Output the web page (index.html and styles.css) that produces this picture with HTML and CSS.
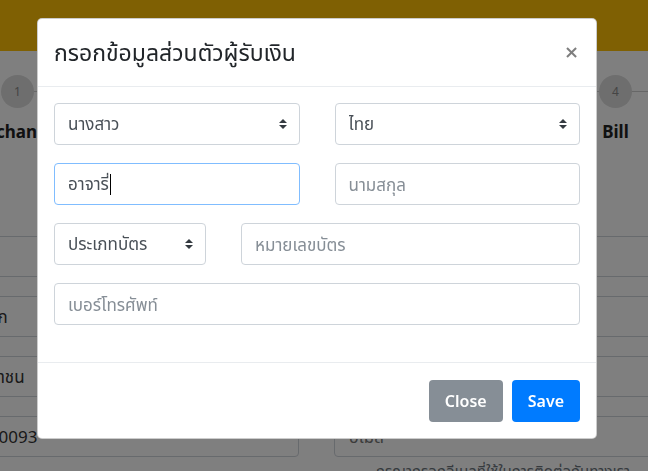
FILE: index.html
```html
<!DOCTYPE html>
<html lang="th">
<head>
<meta charset="utf-8">
<title>กรอกข้อมูลส่วนตัวผู้รับเงิน</title>
<link rel="stylesheet" href="styles.css">
</head>
<body>
<div class="page">
  <div class="topbar"></div>
  <div class="steps">
    <div class="step"><div class="circle">1</div><div class="step-label">Exchange</div></div>
    <div class="connector"></div>
    <div class="step"><div class="circle">2</div><div class="step-label">Info</div></div>
    <div class="connector"></div>
    <div class="step"><div class="circle">3</div><div class="step-label">Payment</div></div>
    <div class="connector"></div>
    <div class="step"><div class="circle">4</div><div class="step-label">Bill</div></div>
    <div class="connector end"></div>
  </div>
  <div class="bg-form">
    <div class="bg-field left"></div><div class="bg-field"></div>
    <div class="bg-field left">นามสกุลผู้ฝาก</div><div class="bg-field"></div>
    <div class="bg-field left">เลขบัตรประชาชน</div><div class="bg-field"></div>
    <div class="bg-field left">1100800020093</div><div class="bg-field placeholder">อีเมล</div>
    <div></div><div class="bg-help">กรุณากรอกอีเมลที่ใช้ในการติดต่อกับทางเรา</div>
  </div>
</div>

<div class="backdrop"></div>

<div class="modal">
  <div class="dialog">
    <div class="content">
      <div class="header">
        <h5 class="title">กรอกข้อมูลส่วนตัวผู้รับเงิน</h5>
        <button class="close" type="button">×</button>
      </div>
      <div class="body">
        <div class="row two">
          <div class="select-wrap">
            <select class="control"><option>นางสาว</option></select>
            <svg class="arrow" viewBox="0 0 4 5" width="8" height="10"><path fill="#343a40" d="M2 0L0 2h4zm0 5L0 3h4z"/></svg>
          </div>
          <div class="select-wrap">
            <select class="control"><option>ไทย</option></select>
            <svg class="arrow" viewBox="0 0 4 5" width="8" height="10"><path fill="#343a40" d="M2 0L0 2h4zm0 5L0 3h4z"/></svg>
          </div>
        </div>
        <div class="row two">
          <div class="control focused">อาจารี่<span class="caret"></span></div>
          <input class="control" type="text" placeholder="นามสกุล">
        </div>
        <div class="row id">
          <div class="select-wrap">
            <select class="control"><option>ประเภทบัตร</option></select>
            <svg class="arrow" viewBox="0 0 4 5" width="8" height="10"><path fill="#343a40" d="M2 0L0 2h4zm0 5L0 3h4z"/></svg>
          </div>
          <input class="control" type="text" placeholder="หมายเลขบัตร">
        </div>
        <div class="row">
          <input class="control" type="text" placeholder="เบอร์โทรศัพท์">
        </div>
      </div>
      <div class="footer">
        <button class="btn secondary" type="button">Close</button>
        <button class="btn primary" type="button">Save</button>
      </div>
    </div>
  </div>
</div>
</body>
</html>
```

FILE: styles.css
```css
* { box-sizing: border-box; }

body {
  margin: 0;
  width: 648px;
  height: 471px;
  overflow: hidden;
  background: #fff;
  font-family: "Noto Sans", "Noto Sans Thai", sans-serif;
  color: #212529;
}

.page {
  width: 648px;
  height: 471px;
  overflow: hidden;
}

.topbar {
  height: 51px;
  background: #ffc107;
}

.steps {
  display: flex;
  align-items: flex-start;
  padding: 24px 0 0 1px;
}

.step {
  width: 33px;
  flex: none;
  display: flex;
  flex-direction: column;
  align-items: center;
}

.circle {
  width: 33px;
  height: 33px;
  border-radius: 50%;
  background: #dcdcdc;
  color: #8a8a8a;
  font-size: 12px;
  display: flex;
  align-items: center;
  justify-content: center;
}

.step-label {
  margin-top: 12px;
  white-space: nowrap;
  font-weight: 700;
  font-size: 17px;
  line-height: 24px;
  color: #222;
}

.connector {
  flex: 1;
  height: 1px;
  margin-top: 16px;
  background: #cfcfcf;
}

.connector.end {
  flex: none;
  width: 16px;
}

.bg-form {
  margin: 92px 0 0 -100px;
  width: 850px;
  display: grid;
  grid-template-columns: 399px 416px;
  column-gap: 35px;
  row-gap: 19px;
}

.bg-field {
  height: 41px;
  border: 1px solid #ced4da;
  border-radius: 4px;
  padding: 0 14px;
  font-size: 17px;
  line-height: 39px;
  color: #333;
  white-space: nowrap;
  overflow: hidden;
}

.bg-field.left {
  padding-left: 10px;
}

.bg-field.placeholder {
  color: #777;
}

.bg-help {
  margin-top: -15px;
  padding-left: 42px;
  font-size: 15px;
  color: #6c757d;
  white-space: nowrap;
}

.backdrop {
  position: fixed;
  inset: 0;
  background: rgba(0, 0, 0, 0.5);
}

.modal {
  position: fixed;
  inset: 0;
}

.dialog {
  width: 560px;
  margin: 18px 0 0 37px;
}

.content {
  background: #fff;
  border: 1px solid rgba(0, 0, 0, 0.2);
  border-radius: 5px;
}

.header {
  display: flex;
  align-items: center;
  justify-content: space-between;
  padding: 16px 16px 17px 16px;
  border-bottom: 1px solid #e9ecef;
}

.title {
  margin: 0;
  font-size: 23px;
  font-weight: 400;
  line-height: 34px;
  color: #212529;
}

.close {
  border: 0;
  background: none;
  padding: 0;
  font-family: "DejaVu Sans", sans-serif;
  font-size: 18px;
  font-weight: 700;
  line-height: 1;
  color: #000;
  opacity: 0.5;
  margin-right: 1px;
}

.body {
  padding: 16px 16px 21px;
}

.row {
  display: grid;
  column-gap: 35px;
  margin-bottom: 18px;
}

.row:last-child {
  margin-bottom: 16px;
}

.row.two {
  grid-template-columns: 1fr 1fr;
}

.row.id {
  grid-template-columns: 152px 1fr;
}

.control {
  display: block;
  width: 100%;
  height: 42px;
  padding: 0 13px;
  border: 1px solid #ced4da;
  border-radius: 4px;
  background: #fff;
  font-family: inherit;
  font-size: 17px;
  line-height: 40px;
  color: #495057;
  outline: none;
  appearance: none;
  -webkit-appearance: none;
}

.control::placeholder {
  color: #868e96;
  opacity: 1;
}

.control.focused {
  border-color: #80bdff;
  display: flex;
  align-items: center;
}

.caret {
  display: inline-block;
  width: 1px;
  height: 21px;
  background: #000;
  margin-left: 1px;
}

.select-wrap {
  position: relative;
}

.arrow {
  position: absolute;
  right: 13px;
  top: 16px;
  pointer-events: none;
}

.footer {
  display: flex;
  justify-content: flex-end;
  padding: 17px 16px 16px;
  border-top: 1px solid #e9ecef;
}

.btn {
  height: 42px;
  padding: 0 15px;
  border: 1px solid transparent;
  border-radius: 4px;
  font-family: inherit;
  font-size: 16px;
  font-weight: 600;
  color: #fff;
}

.btn + .btn {
  margin-left: 9px;
}

.btn.secondary {
  background: #868e96;
}

.btn.primary {
  background: #007bff;
}
```
